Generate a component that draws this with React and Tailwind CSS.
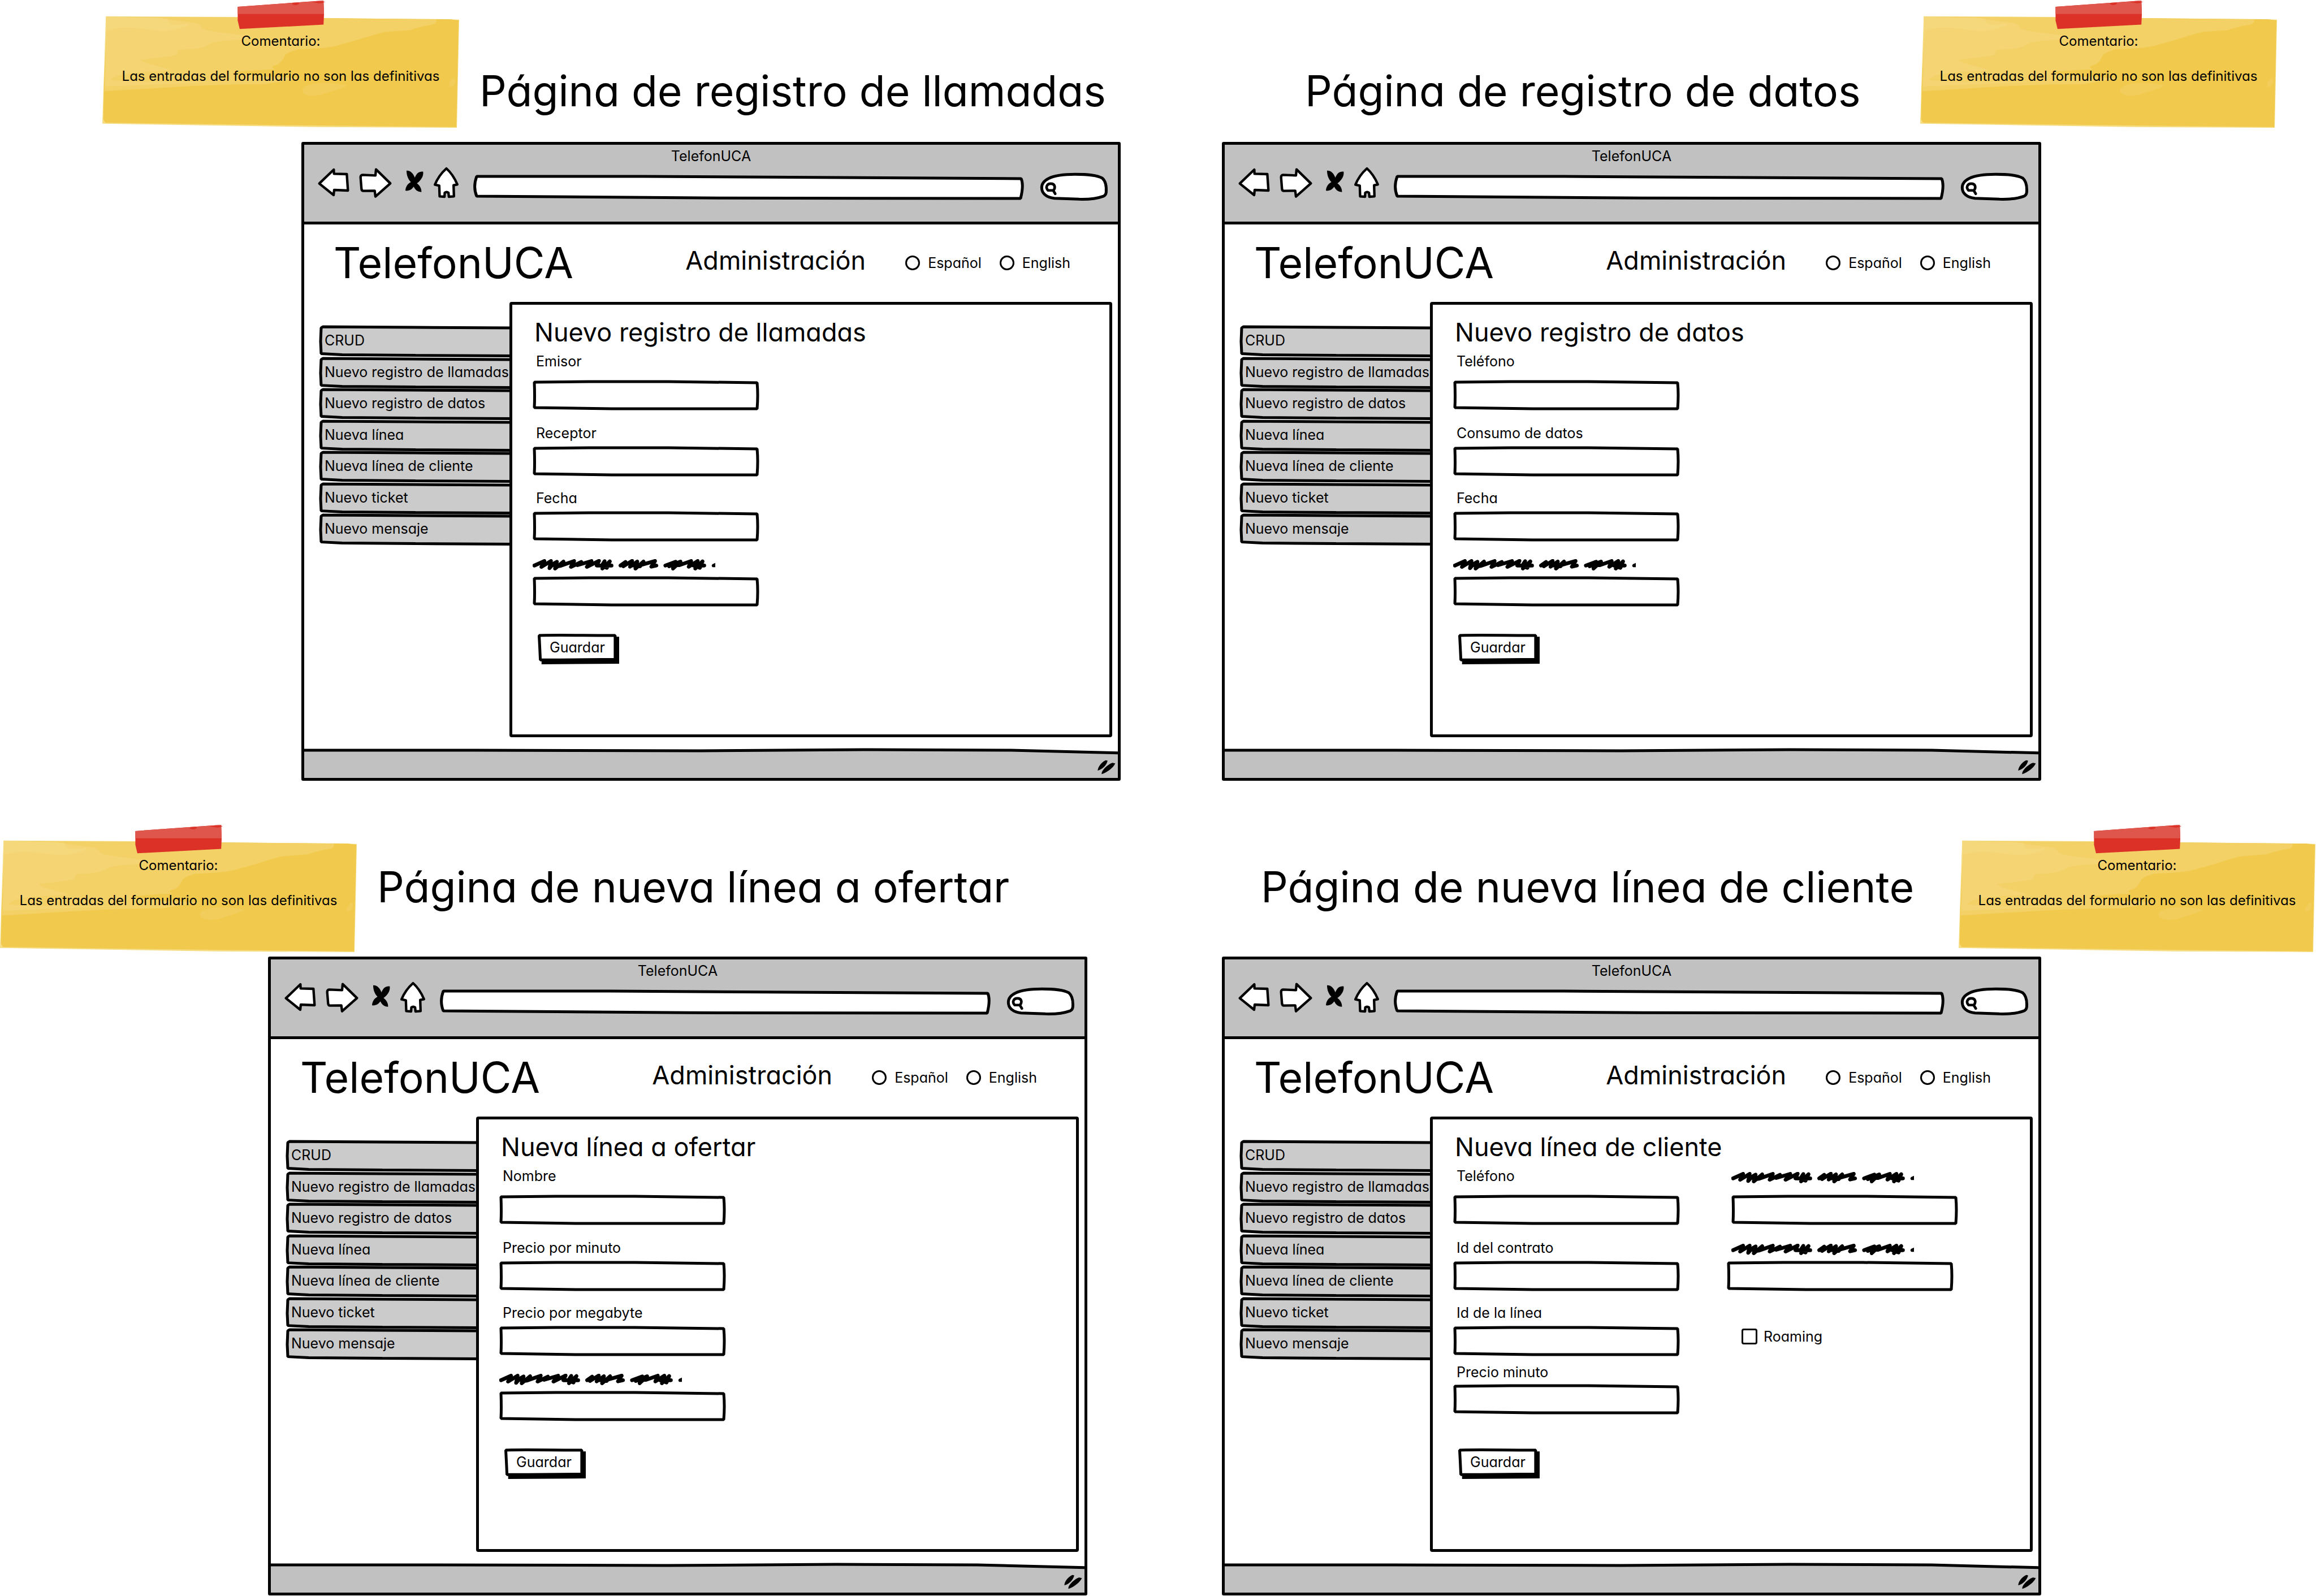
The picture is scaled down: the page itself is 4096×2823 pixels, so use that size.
import React, { useId } from "react";

const MENU = [
  "CRUD",
  "Nuevo registro de llamadas",
  "Nuevo registro de datos",
  "Nueva línea",
  "Nueva línea de cliente",
  "Nuevo ticket",
  "Nuevo mensaje",
];

/* Hand-drawn outline that stretches to fill its parent. */
function Sketch({ box, d, fill = "#fff", children }) {
  return (
    <svg
      aria-hidden="true"
      className="pointer-events-none absolute inset-0 h-full w-full overflow-visible"
      viewBox={box}
      preserveAspectRatio="none"
    >
      {children}
      <path d={d} fill={fill} stroke="#000" strokeWidth="5" strokeLinejoin="bevel" vectorEffect="non-scaling-stroke" />
    </svg>
  );
}

function Note() {
  return (
    <aside className="relative h-[225px] w-[631px] shrink-0 pt-14 text-center text-[24px] leading-[31px]">
      <svg
        aria-hidden="true"
        className="absolute inset-0 h-full w-full"
        viewBox="50 3 1426 681"
        preserveAspectRatio="none"
      >
        <path d="M64 87 L600 91 L1476 105 L1467 684 L900 680 L50 662 Z" fill="#f6dc82" />
        <path d="M66 91 L600 94 L1440 103 L1474 109 L1465 680 L900 672 L62 657 L54 640 L56 470 L66 200 Z" fill="#f1ca4d" />
        <path
          d="M66 91 L600 94 L1384 104 Q1388 125 1370 131 Q1310 145 1280 161 L1180 171 C1130 185 1050 225 1010 235 C960 262 860 260 830 265 Q790 280 780 295 Q765 345 735 352 Q720 360 740 371 Q640 376 570 388 L700 410 L850 418 L700 450 C450 450 250 475 58 488 L66 200 Z"
          fill="#f3d166"
        />
        <path
          d="M66 91 L270 95 L430 125 C450 140 440 155 480 165 C560 182 620 185 655 200 C600 222 520 210 480 235 C440 270 380 262 355 267 Q345 275 350 290 C340 305 230 312 205 322 C215 340 300 360 325 377 C240 385 100 385 85 430 L200 437 L540 437 L60 463 L66 200 Z"
          fill="#f4d473"
        />
        <path d="M66 91 L270 95 L310 101 Q310 130 350 134 Q390 122 398 130 C380 150 330 165 290 165 C210 160 160 130 66 163 Z" fill="#f6d87c" />
        <path d="M850 480 C855 440 960 435 1026 458 C1010 475 960 490 930 505 C900 518 845 515 850 480 Z M1457 417 Q1430 440 1438 462 Q1452 470 1461 440 Z" fill="#f2cd5c" />
        <path d="M591 36 L934 3 L936 75 L934 132 L599 155 L591 110 Z" fill="#dc3127" />
        <path d="M591 36 L934 3 L936 75 L591 75 Z" fill="#df564c" />
        <path d="M808 19 Q812 14 838 16 Q835 27 820 27 Q808 26 808 19 Z M887 10 L912 7 L940 9 Q930 19 915 17 Z" fill="#dc3127" />
      </svg>
      <div className="relative">
        <p>Comentario:</p>
        <p className="mt-[31px]">Las entradas del formulario no son las definitivas</p>
      </div>
    </aside>
  );
}

function NavButton({ label, className, box, d, solid }) {
  return (
    <button type="button" aria-label={label} className={className}>
      <svg viewBox={box} className="h-full w-full">
        <path d={d} fill={solid ? "#000" : "#fff"} stroke="#000" strokeWidth={solid ? 0 : 13} strokeLinejoin="round" />
      </svg>
    </button>
  );
}

function BrowserBar() {
  return (
    <header className="flex h-[141px] flex-col border-b-[5px] border-black bg-[#c1c1c1] pt-1">
      <p className="text-center">TelefonUCA</p>
      <div className="mt-[3px] flex items-start pl-[23px] pr-[18px]">
        <NavButton
          label="Atrás"
          className="h-14 w-[58px]"
          box="18 -8 174 168"
          d="M29 81 L106 7 L107 29 L175 31 L181 118 L108 115 L105 142 Z"
        />
        <NavButton
          label="Adelante"
          className="ml-[15px] h-14 w-[60px]"
          box="240 -8 180 168"
          d="M251 48 Q251 36 262 35 L330 38 L333 6 L409 80 L330 150 L326 119 L264 120 Q257 119 256 110 Z"
        />
        <NavButton
          label="Detener"
          className="ml-[22px] h-14 w-[34px]"
          box="488 -8 102 168"
          solid
          d="M497 12 C520 11 534 30 541 50 C550 28 562 16 585 18 C588 42 575 62 552 80 C568 92 577 108 576 126 C552 126 543 112 535 98 C524 113 512 121 491 119 C492 100 500 84 520 73 C504 56 497 36 497 12 Z"
        />
        <NavButton
          label="Inicio"
          className="ml-[15px] h-14 w-12"
          box="636 -8 143 168"
          d="M709 1 C735 24 752 50 767 86 L747 90 L748 120 L749 149 L722 151 L720 130 Q710 122 700 130 L699 151 L673 149 L671 92 L648 87 C663 50 683 24 709 1 Z"
        />
        <div className="relative ml-6 mt-[14px] h-[45px] flex-1">
          <Sketch box="0 0 974 45" d="M6 3 L300 3 C500 3 700 5 968 7 C972 16 970 30 967 42 C700 42 300 42 6 38 C1 26 2 14 6 3 Z" />
          <input type="text" aria-label="Dirección" className="relative h-full w-full bg-transparent px-4 outline-none" />
        </div>
        <div className="relative ml-7 mt-[11px] h-[49px] w-[119px]">
          <Sketch
            box="45 57 358 148"
            d="M230 64 C300 64 345 68 375 85 C392 100 397 130 395 160 Q393 176 380 181 C340 196 290 198 250 197 L120 192 C75 188 52 165 52 135 C52 100 90 64 230 64 Z"
          />
          <svg aria-hidden="true" className="absolute inset-0 h-full w-full" viewBox="45 57 358 148" preserveAspectRatio="none">
            <path
              d="M86 150 C70 134 80 114 100 114 C124 114 126 136 114 150 Z M113 150 L124 168"
              fill="none"
              stroke="#000"
              strokeWidth="14"
              strokeLinecap="round"
              strokeLinejoin="round"
            />
          </svg>
          <input type="search" aria-label="Buscar" className="relative h-full w-full bg-transparent pl-8 pr-3 outline-none" />
        </div>
      </div>
    </header>
  );
}

function Language({ name, label }) {
  return (
    <label className="flex items-center gap-[14px]">
      <input type="radio" name={name} className="h-[26px] w-[26px] appearance-none rounded-full border-[3px] border-black bg-white" />
      {label}
    </label>
  );
}

function SiteHeader() {
  const group = useId();
  return (
    <div className="flex h-[137px] items-start pl-[52px] pr-[84px]">
      <p className="mt-5 text-[75px] leading-[96px]">TelefonUCA</p>
      <p className="ml-auto mt-9 text-[45px] leading-[56px]">Administración</p>
      <div className="ml-[70px] mt-[52px] flex gap-8">
        <Language name={group} label="Español" />
        <Language name={group} label="English" />
      </div>
    </div>
  );
}

function SideMenu() {
  return (
    <nav className="mt-[42px] grid h-[389px] w-[336px] shrink-0 auto-rows-fr">
      {MENU.map((item) => (
        <a key={item} href="#" className="relative block whitespace-nowrap pl-[9px] pt-[10px]">
          <Sketch box="0 0 336 56" fill="#cbcbcb" d="M3 4 L6 2 L170 3 L340 4 L340 54 L170 53 L40 52 L3 50 L2 28 Z" />
          <span className="relative">{item}</span>
        </a>
      ))}
    </nav>
  );
}

function Scribble() {
  return (
    <svg aria-hidden="true" className="block h-5 w-[323px]" viewBox="115 150 977 60" preserveAspectRatio="none">
      <path
        d="M124 184 L178 160 L162 191 L213 160 L205 198 L225 175 L245 164 L235 200 L280 163 L262 184 L235 190 L262 186 L337 160 L320 191 L375 165 L355 182 L430 160 L405 191 L470 159 L458 184 L485 184 L500 161 L488 200 L528 162 L512 196 L480 185 L537 184
           M585 184 L612 165 L600 188 L647 159 L636 190 L675 163 L665 200 L708 163 L690 188 L640 182 L690 182 L770 160 L750 190 L777 184
           M825 184 L880 164 L845 188 L906 163 L866 200 L868 180 L900 182 L963 160 L950 190 L998 160 L985 200 L1024 162 L1010 196 L975 184 L1033 184"
        fill="none"
        stroke="#000"
        strokeWidth="20"
        strokeLinecap="round"
        strokeLinejoin="round"
      />
      <path d="M1092 170 L1078 176 Q1068 184 1078 193 L1092 193 Z" fill="#000" />
    </svg>
  );
}

function Field({ label, gap = "mt-[22px]", inputGap = "mt-2", shift = "" }) {
  const id = useId();
  return (
    <div className={gap}>
      {label ? (
        <label htmlFor={id} className="block w-fit pl-[6px]">
          {label}
        </label>
      ) : (
        <label htmlFor={id} aria-label="Otra entrada" className="block h-8 pt-[9px]">
          <Scribble />
        </label>
      )}
      <div className={`relative h-[53px] w-[400px] ${inputGap} ${shift}`}>
        <Sketch box="0 0 400 53" d="M3 3 L100 2 L240 2 L397 4 Q399 25 397 50 L260 50 L140 50 L3 48 Q4 30 3 3 Z" />
        <input id={id} type="text" className="relative h-full w-full bg-transparent px-4 outline-none" />
      </div>
    </div>
  );
}

function SaveButton({ gap }) {
  return (
    <button type="button" className={`relative ml-[9px] block h-[54px] w-[144px] pb-[6px] pr-1 ${gap}`}>
      <Sketch box="166 690 405 162" d="M173 699 C240 696 400 699 551 699 L551 826 C400 828 300 829 179 829 L176 760 Z">
        <path d="M185 706 L571 706 L571 849 L185 852 Z" fill="#000" />
      </Sketch>
      <span className="relative">Guardar</span>
    </button>
  );
}

function Roaming() {
  return (
    <label className="ml-[18px] mt-16 flex items-center gap-[11px]">
      <input type="checkbox" className="h-7 w-7 appearance-none rounded-[4px] border-[3px] border-black bg-white" />
      Roaming
    </label>
  );
}

function Browser({ heading, children }) {
  return (
    <section className="rounded-[3px] border-[5px] border-black bg-white">
      <BrowserBar />
      <SiteHeader />
      <div className="flex items-start pl-[27px] pr-[10px]">
        <SideMenu />
        <main className="relative min-h-[770px] flex-1 rounded-[4px] border-[5px] border-black bg-white pl-9 pt-[21px]">
          <h2 className="pl-[3px] text-[45px] leading-[56px]">{heading}</h2>
          {children}
        </main>
      </div>
      <footer className="relative mt-[19px] flex h-[53px] items-end justify-end px-1 pb-[6px]">
        <svg
          aria-hidden="true"
          className="absolute inset-0 h-full w-full"
          viewBox="0 0 1439 53"
          preserveAspectRatio="none"
        >
          <path d="M-5 4 L300 4 L700 5 L1000 3 L1250 4 L1444 9 L1444 60 L-5 60 Z" fill="#c1c1c1" stroke="#000" strokeWidth="5" />
        </svg>
        <svg aria-hidden="true" className="relative h-[26px] w-8" viewBox="530 288 97 77">
          <path
            d="M531 345 C532 325 550 300 574 289 L584 292 C580 315 555 340 531 345 Z M553 364 C548 345 590 308 610 303 L625 306 C615 330 580 355 553 364 Z"
            fill="#000"
          />
        </svg>
      </footer>
    </section>
  );
}

function PageTitle({ className, children }) {
  return <h1 className={`whitespace-nowrap text-[75px] leading-[96px] ${className}`}>{children}</h1>;
}

function SimpleForm({ labels }) {
  return (
    <form>
      <Field label={labels[0]} gap="mt-[7px]" inputGap="mt-[18px]" />
      <Field label={labels[1]} gap="mt-6" />
      <Field label={labels[2]} />
      <Field />
      <SaveButton gap="mt-12" />
    </form>
  );
}

export default function App() {
  return (
    <div className="grid w-full grid-cols-2 bg-white font-['Inter','Liberation_Sans',sans-serif] text-[25px] leading-8 text-black [font-feature-settings:'cv11']">
      <article className="h-[1441px] pl-[533px] pr-[66px]">
        <div className="-ml-[352px] flex h-[251px] items-start pt-px">
          <Note />
          <PageTitle className="ml-9 mt-28">Página de registro de llamadas</PageTitle>
        </div>
        <Browser heading="Nuevo registro de llamadas">
          <SimpleForm labels={["Emisor", "Receptor", "Fecha"]} />
        </Browser>
      </article>

      <article className="h-[1441px] pl-[113px] pr-[486px]">
        <div className="-mr-[417px] flex h-[251px] items-start justify-between pt-px">
          <PageTitle className="ml-[147px] mt-28">Página de registro de datos</PageTitle>
          <Note />
        </div>
        <Browser heading="Nuevo registro de datos">
          <SimpleForm labels={["Teléfono", "Consumo de datos", "Fecha"]} />
        </Browser>
      </article>

      <article className="pl-[474px] pr-[125px]">
        <div className="-ml-[474px] flex h-[251px] items-start pt-[18px]">
          <Note />
          <PageTitle className="ml-9 mt-[62px]">Página de nueva línea a ofertar</PageTitle>
        </div>
        <Browser heading="Nueva línea a ofertar">
          <SimpleForm labels={["Nombre", "Precio por minuto", "Precio por megabyte"]} />
        </Browser>
      </article>

      <article className="pl-[113px] pr-[486px]">
        <div className="-mr-[485px] flex h-[251px] items-start justify-between pt-[18px]">
          <PageTitle className="ml-[69px] mt-[62px]">Página de nueva línea de cliente</PageTitle>
          <Note />
        </div>
        <Browser heading="Nueva línea de cliente">
          <form>
            <div className="flex gap-[92px]">
              <div>
                <Field label="Teléfono" gap="mt-[7px]" inputGap="mt-[18px]" />
                <Field label="Id del contrato" gap="mt-6" />
                <Field label="Id de la línea" />
                <Field label="Precio minuto" gap="mt-3" inputGap="mt-[6px]" />
              </div>
              <div>
                <Field gap="mt-[7px]" inputGap="mt-[18px]" />
                <Field gap="mt-6" shift="-ml-2" />
                <Roaming />
              </div>
            </div>
            <SaveButton gap="mt-[60px]" />
          </form>
        </Browser>
      </article>
    </div>
  );
}
